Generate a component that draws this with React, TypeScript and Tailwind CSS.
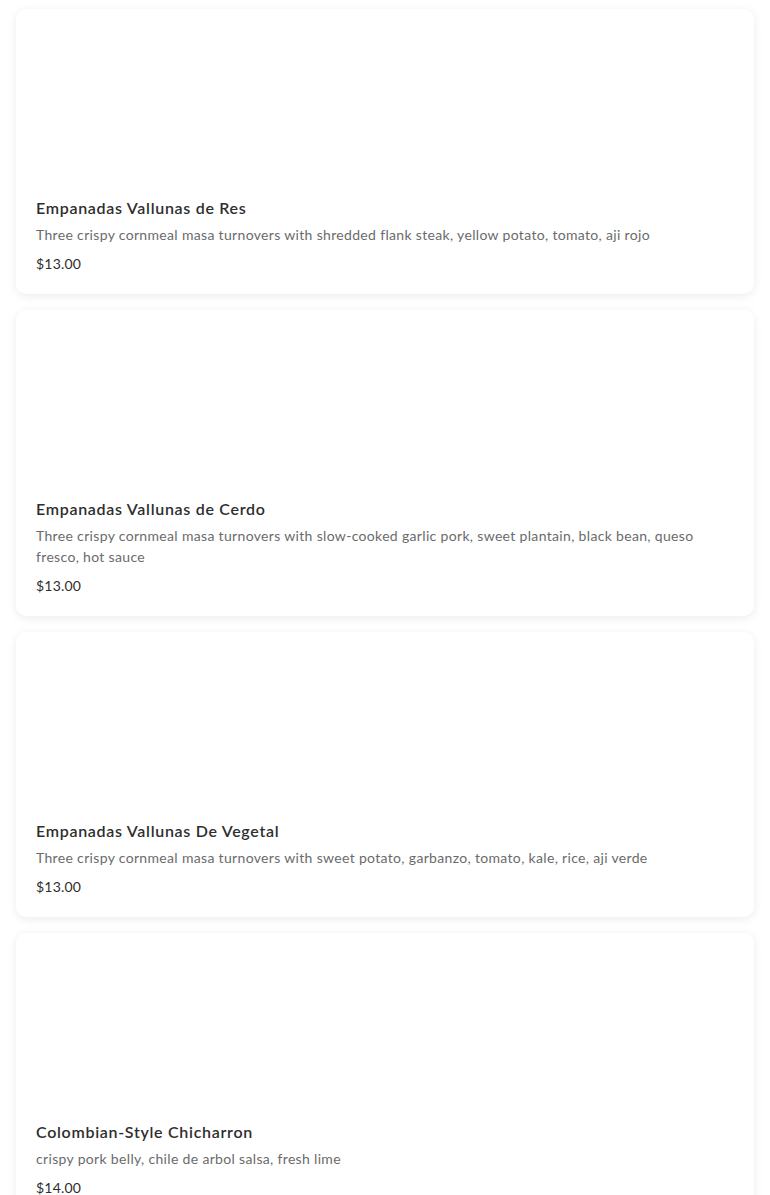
import React from 'react';

type Item = {
  name: string;
  description: string;
  price: string;
};

const items: Item[] = [
  {
    name: 'Empanadas Vallunas de Res',
    description:
      'Three crispy cornmeal masa turnovers with shredded flank steak, yellow potato, tomato, aji rojo',
    price: '$13.00',
  },
  {
    name: 'Empanadas Vallunas de Cerdo',
    description:
      'Three crispy cornmeal masa turnovers with slow-cooked garlic pork, sweet plantain, black bean, queso fresco, hot sauce',
    price: '$13.00',
  },
  {
    name: 'Empanadas Vallunas De Vegetal',
    description:
      'Three crispy cornmeal masa turnovers with sweet potato, garbanzo, tomato, kale, rice, aji verde',
    price: '$13.00',
  },
  {
    name: 'Colombian-Style Chicharron',
    description: 'crispy pork belly, chile de arbol salsa, fresh lime',
    price: '$14.00',
  },
];

const MenuCard = ({ item }: { item: Item }) => (
  <div className="rounded-[10px] bg-white shadow-[0_2px_10px_rgba(0,0,0,0.08)]">
    <div className="h-[167px]" />
    <div className="px-5 pt-5 pb-5">
      <h3 className="text-[16px] leading-6 font-semibold tracking-[0.7px] text-[#2e2e2e]">
        {item.name}
      </h3>
      <p className="mt-1 text-[14px] leading-[21px] tracking-[0.33px] text-[#6b6b6b]">
        {item.description}
      </p>
      <p className="mt-[9px] text-[14px] leading-5 tracking-[0.2px] text-[#2e2e2e]">{item.price}</p>
    </div>
  </div>
);

export default function App() {
  return (
    <div className="h-[1195px] overflow-hidden bg-white font-['Lato',sans-serif] px-4 pt-[9px]">
      <div className="flex flex-col gap-4">
        {items.map((item) => (
          <MenuCard key={item.name} item={item} />
        ))}
      </div>
    </div>
  );
}
